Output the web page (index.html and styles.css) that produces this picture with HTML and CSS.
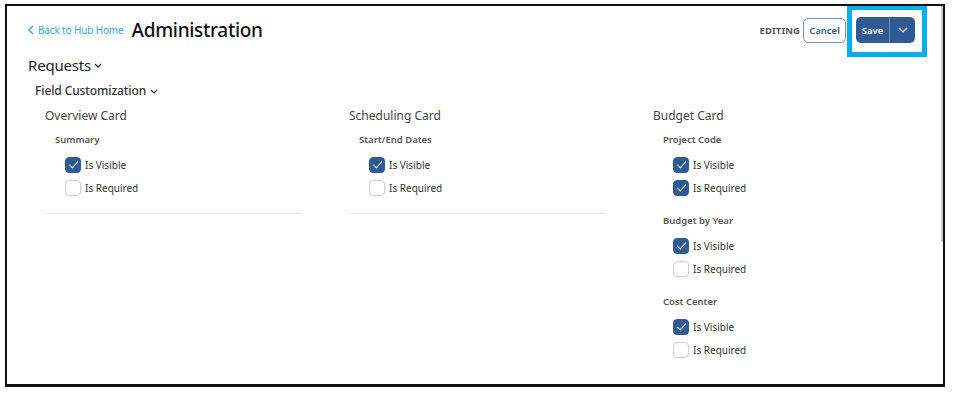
FILE: index.html
```html
<!DOCTYPE html>
<html>
<head>
<meta charset="utf-8">
<link rel="stylesheet" href="styles.css">
</head>
<body>
<div class="frame">
  <div class="header">
    <div class="header-left">
      <a class="back" href="#"><svg class="back-ico" viewBox="0 0 6 10" width="6" height="10"><path d="M5 1 L1 5 L5 9" fill="none" stroke="#2ea8e0" stroke-width="1.4"/></svg>Back to Hub Home</a>
      <h1 class="title">Administration</h1>
    </div>
    <div class="header-right">
      <span class="editing">EDITING</span>
      <button class="cancel">Cancel</button>
      <div class="save-group">
        <button class="save">Save</button>
        <button class="save-arrow"><svg viewBox="0 0 10 6" width="10" height="6"><path d="M1 1 L5 5 L9 1" fill="none" stroke="#fff" stroke-width="1.2"/></svg></button>
      </div>
    </div>
  </div>
  <div class="section-title">Requests<svg class="chev" viewBox="0 0 8 5" width="8" height="5"><path d="M1 1 L4 4 L7 1" fill="none" stroke="#222" stroke-width="1.3"/></svg></div>
  <div class="sub-title">Field Customization<svg class="chev" viewBox="0 0 8 5" width="8" height="5"><path d="M1 1 L4 4 L7 1" fill="none" stroke="#333" stroke-width="1.2"/></svg></div>
  <div class="cards">
    <div class="card">
      <div class="card-title">Overview Card</div>
      <div class="group">
        <div class="group-title">Summary</div>
        <label class="row"><span class="cb on"></span>Is Visible</label>
        <label class="row"><span class="cb"></span>Is Required</label>
      </div>
      <div class="divider"></div>
    </div>
    <div class="card">
      <div class="card-title">Scheduling Card</div>
      <div class="group">
        <div class="group-title">Start/End Dates</div>
        <label class="row"><span class="cb on"></span>Is Visible</label>
        <label class="row"><span class="cb"></span>Is Required</label>
      </div>
      <div class="divider"></div>
    </div>
    <div class="card">
      <div class="card-title">Budget Card</div>
      <div class="group">
        <div class="group-title">Project Code</div>
        <label class="row"><span class="cb on"></span>Is Visible</label>
        <label class="row"><span class="cb on"></span>Is Required</label>
      </div>
      <div class="group">
        <div class="group-title">Budget by Year</div>
        <label class="row"><span class="cb on"></span>Is Visible</label>
        <label class="row"><span class="cb"></span>Is Required</label>
      </div>
      <div class="group">
        <div class="group-title">Cost Center</div>
        <label class="row"><span class="cb on"></span>Is Visible</label>
        <label class="row"><span class="cb"></span>Is Required</label>
      </div>
    </div>
  </div>
  <div class="scroll-thumb"></div>
  <div class="highlight"></div>
</div>
</body>
</html>
```
FILE: styles.css
```css
* { box-sizing: border-box; }
html, body { margin: 0; padding: 0; background: #fff; }
body { font-family: "Noto Sans", "Open Sans", sans-serif; color: #222; }

.frame {
  position: relative;
  margin: 4px 0 0 5px;
  width: 940px;
  height: 383px;
  border: 2px solid #111;
  border-bottom-width: 3px;
  padding: 11px 28px 0 21px;
  overflow: hidden;
}

.header {
  display: flex;
  justify-content: space-between;
  align-items: center;
  height: 26px;
}
.header-left { display: flex; align-items: center; gap: 8px; }
.back {
  display: flex; align-items: center; gap: 4px;
  color: #2ea8e0; text-decoration: none;
  font-size: 10px; letter-spacing: -0.15px;
}
.title { margin: 0; font-size: 19px; font-weight: 500; color: #111; letter-spacing: -0.3px; line-height: 26px; }

.header-right { display: flex; align-items: center; }
.editing { font-size: 9.5px; font-weight: 700; color: #555; margin-right: 3px; letter-spacing: 0.1px; }
.cancel {
  font-family: inherit;
  height: 25px; width: 43px; padding: 0;
  background: #fff; border: 1px solid #7b93b8; border-radius: 5px;
  color: #2f5a93; font-size: 9.5px; font-weight: 600;
  margin-right: 10px;
}
.save-group { display: flex; height: 26px; border-radius: 5px; overflow: hidden; background: #2f5a93; }
.save {
  font-family: inherit; border: 0; background: transparent; color: #fff;
  width: 34px; font-size: 9.5px; font-weight: 600; padding: 0;
  border-right: 1px solid #6f8cb8;
}
.save-arrow { border: 0; background: transparent; width: 25px; padding: 0; display: flex; align-items: center; justify-content: center; }

.section-title {
  margin-top: 11px; font-size: 15px; line-height: 22px; color: #222;
  display: flex; align-items: center; gap: 3px; letter-spacing: -0.2px;
}
.sub-title {
  margin-top: 6px; margin-left: 7px; font-size: 12px; line-height: 18px; font-weight: 500; color: #333;
  display: flex; align-items: center; gap: 4px; letter-spacing: -0.1px;
}

.cards {
  display: grid;
  grid-template-columns: 304px 304px 280px;
  margin-top: 7px;
  margin-left: 16px;
}
.card-title { font-size: 12px; line-height: 18px; color: #444; padding-left: 1px; }
.group { padding-left: 11px; margin-top: 7px; }
.group + .group { margin-top: 14px; }
.group-title { font-size: 9.5px; line-height: 16px; font-weight: 600; color: #555; margin-bottom: 5px; }
.row {
  display: flex; align-items: center; gap: 4px;
  height: 23px; padding-left: 10px;
  font-size: 10px; color: #333;
}
.cb {
  width: 16px; height: 16px; border-radius: 4px;
  border: 1px solid #cfcfcf; background: #fff; flex: none;
  position: relative;
}
.cb.on { background: #2f5a93; border-color: #2f5a93; }
.cb.on::after {
  content: ""; position: absolute;
  left: 3px; top: 3px; width: 8px; height: 4px;
  border-left: 1.2px solid #fff; border-bottom: 1.2px solid #fff;
  transform: rotate(-48deg);
  transform-origin: center;
}
.divider { margin-top: 14px; width: 258px; height: 1px; background: #e6e6e6; }

.scroll-thumb {
  position: absolute; right: 0; top: 0; width: 2px; height: 236px; background: #c8c8c8;
}
.highlight {
  position: absolute; left: 840px; top: -1px; width: 80px; height: 52px;
  border: 5px solid #00b0f0;
}
```
